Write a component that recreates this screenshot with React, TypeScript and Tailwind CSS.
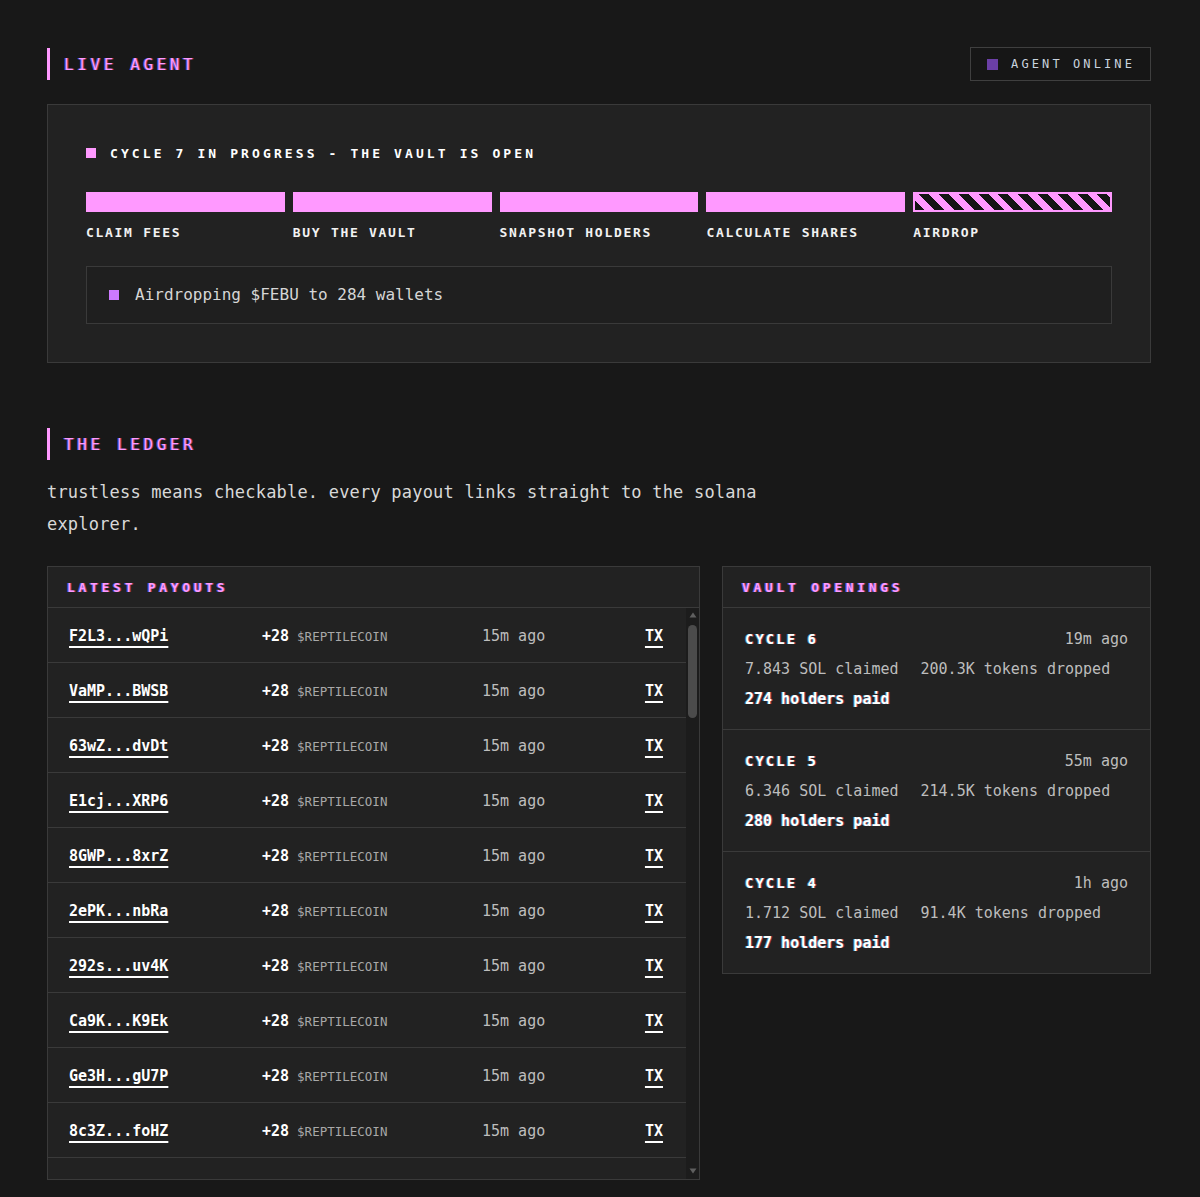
import React from "react";

const pinkGlow =
  "[text-shadow:-1px_0_rgba(90,110,255,0.75),1px_0_rgba(255,90,140,0.55)]";
const whiteGlow =
  "[text-shadow:-1px_0_rgba(80,220,255,0.55),1px_0_rgba(255,70,120,0.55)]";

const steps = [
  { label: "CLAIM FEES", done: true },
  { label: "BUY THE VAULT", done: true },
  { label: "SNAPSHOT HOLDERS", done: true },
  { label: "CALCULATE SHARES", done: true },
  { label: "AIRDROP", done: false },
];

const recent = [
  "F2L3...wQPi",
  "VaMP...BWSB",
  "63wZ...dvDt",
  "E1cj...XRP6",
  "8GWP...8xrZ",
  "2ePK...nbRa",
  "292s...uv4K",
  "Ca9K...K9Ek",
  "Ge3H...gU7P",
  "8c3Z...foHZ",
  "4dNa...Vc1s",
  "Qm7R...hE5j",
];

const openings = [
  { cycle: 6, ago: "19m ago", sol: "7.843", tokens: "200.3K", holders: 274 },
  { cycle: 5, ago: "55m ago", sol: "6.346", tokens: "214.5K", holders: 280 },
  { cycle: 4, ago: "1h ago", sol: "1.712", tokens: "91.4K", holders: 177 },
];

function SectionTitle({ children }: { children: React.ReactNode }) {
  return (
    <div className="flex h-8 items-center border-l-[3px] border-[#ff99ff] pl-[14px]">
      <span
        className={`pt-[2px] text-[16px] leading-none tracking-[3.6px] text-[#ff99ff] ${pinkGlow}`}
      >
        {children}
      </span>
    </div>
  );
}

function PanelHeader({ children }: { children: React.ReactNode }) {
  return (
    <div className="flex h-[41px] shrink-0 items-center border-b border-[#3a3a3a] px-[19px]">
      <span
        className={`text-[13px] font-bold leading-none tracking-[3.7px] text-[#ff99ff] ${pinkGlow}`}
      >
        {children}
      </span>
    </div>
  );
}

// dark scroll track drawn beside the payout list
function ScrollTrack() {
  return (
    <div className="flex w-[13px] shrink-0 flex-col items-center bg-[#1c1c1c] pt-[4px] pb-[5px]">
      <svg width="8" height="6" viewBox="0 0 8 6">
        <path d="M4 0.5 L7.5 5.5 L0.5 5.5 Z" fill="#5f5f5f" />
      </svg>
      <div className="mt-[7px] h-[93px] w-[9px] rounded-full bg-[#4b4b4b]" />
      <div className="flex-1" />
      <svg width="8" height="6" viewBox="0 0 8 6">
        <path d="M0.5 0.5 L7.5 0.5 L4 5.5 Z" fill="#5f5f5f" />
      </svg>
    </div>
  );
}

export default function App() {
  return (
    <div className="min-h-screen bg-[#181818] pl-[47px] pr-[49px] pt-[47px] pb-10 font-['DejaVu_Sans_Mono',monospace] text-[#e6e6e6]">
      {/* live agent header */}
      <div className="flex h-[34px] items-center justify-between">
        <SectionTitle>LIVE AGENT</SectionTitle>
        <div className="flex h-[34px] items-center gap-[13px] border border-[#3f3f3f] bg-[#161616] pl-4 pr-[15px]">
          <span className="h-[11px] w-[11px] bg-[#6b3fa6]" />
          <span className="text-[12px] leading-none tracking-[3.1px] text-[#c9d3df]">
            AGENT ONLINE
          </span>
        </div>
      </div>

      {/* cycle progress card */}
      <div className="mt-[23px] border border-[#3a3a3a] bg-[#222222] px-[38px] pt-[39px] pb-[38px]">
        <div className="flex h-[18px] items-center gap-[14px]">
          <span className="h-[10px] w-[10px] bg-[#ff99ff]" />
          <span className="text-[13px] font-bold leading-none tracking-[3.1px] text-white">
            CYCLE 7 IN PROGRESS - THE VAULT IS OPEN
          </span>
        </div>

        <div className="mt-[30px] grid grid-cols-5 gap-2">
          {steps.map((s) => (
            <div key={s.label} className="flex flex-col">
              {s.done ? (
                <div className="h-[20px] bg-[#ff99ff]" />
              ) : (
                <div className="h-[20px] border-2 border-[#ff99ff] bg-[repeating-linear-gradient(45deg,#151515_0px,#151515_7px,#ff99ff_7px,#ff99ff_14px)]" />
              )}
              <span className="mt-[13px] text-[13px] font-bold leading-4 tracking-[1.7px] text-[#f2f2f2]">
                {s.label}
              </span>
            </div>
          ))}
        </div>

        <div className="mt-[25px] flex h-[58px] items-center gap-4 border border-[#3a3a3a] bg-[#1f1f1f] pl-[22px]">
          <span className="h-[10px] w-[10px] bg-[#cc7aff]" />
          <span className="text-[16px] text-[#d6d6d6]">
            Airdropping $FEBU to 284 wallets
          </span>
        </div>
      </div>

      {/* ledger */}
      <div className="mt-[65px]">
        <SectionTitle>THE LEDGER</SectionTitle>
      </div>
      <p className="mt-4 max-w-[740px] text-[17px] leading-8 tracking-[0.2px] text-[#d8d8d8]">
        trustless means checkable. every payout links straight to the solana
        explorer.
      </p>

      <div className="mt-[26px] flex items-start gap-[22px]">
        {/* latest payouts */}
        <div className="flex h-[614px] w-[653px] shrink-0 flex-col border border-[#3a3a3a] bg-[#222222]">
          <PanelHeader>LATEST PAYOUTS</PanelHeader>
          <div className="flex min-h-0 flex-1">
            <div className="min-w-0 flex-1 overflow-hidden">
              {recent.map((addr) => (
                <div
                  key={addr}
                  className="grid h-[55px] grid-cols-[193px_220px_1fr_auto] items-center border-b border-[#3a3a3a] pl-[21px] pr-[23px] pt-[3px]"
                >
                  <span className="text-[15px] font-bold text-white underline decoration-[1.5px] underline-offset-[5px]">
                    {addr}
                  </span>
                  <span className="flex items-baseline gap-[8px]">
                    <span className="text-[15px] font-bold text-white">+28</span>
                    <span className="text-[12.5px] text-[#a8a8a8]">
                      $REPTILECOIN
                    </span>
                  </span>
                  <span className="text-[15px] text-[#bdbdbd]">15m ago</span>
                  <span className="text-[15px] font-bold text-white underline decoration-[1.5px] underline-offset-[5px]">
                    TX
                  </span>
                </div>
              ))}
            </div>
            <ScrollTrack />
          </div>
        </div>

        {/* vault openings */}
        <div className="flex flex-1 flex-col border border-[#3a3a3a] bg-[#222222]">
          <PanelHeader>VAULT OPENINGS</PanelHeader>
          {openings.map((o, i) => (
            <div
              key={o.cycle}
              className={`px-[22px] pt-[16px] pb-[15px] leading-[30px] ${
                i < openings.length - 1 ? "border-b border-[#3a3a3a]" : ""
              }`}
            >
              <div className="flex items-center justify-between">
                <span
                  className={`text-[14px] font-bold tracking-[2px] text-white ${whiteGlow}`}
                >
                  CYCLE {o.cycle}
                </span>
                <span className="text-[15px] text-[#bdbdbd]">{o.ago}</span>
              </div>
              <div className="flex gap-[22px] text-[15px] text-[#bdbdbd]">
                <span>{o.sol} SOL claimed</span>
                <span>{o.tokens} tokens dropped</span>
              </div>
              <div className={`text-[15px] font-bold text-white ${whiteGlow}`}>
                {o.holders} holders paid
              </div>
            </div>
          ))}
        </div>
      </div>
    </div>
  );
}
